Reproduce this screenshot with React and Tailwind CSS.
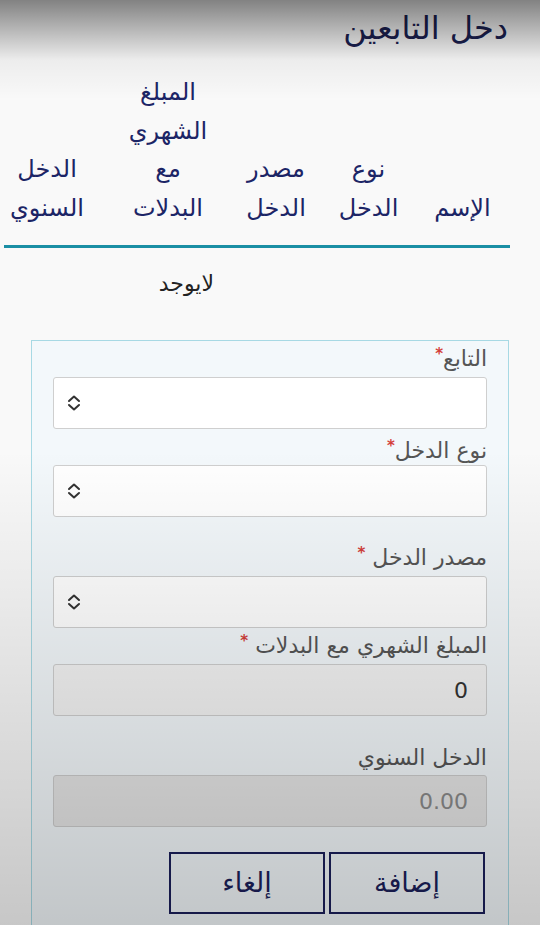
import React from 'react';

const FONT = { fontFamily: '"DejaVu Sans", "Noto Sans", sans-serif' };

const SelectArrows = () => (
  <svg width="16" height="18" viewBox="0 0 16 18" fill="none" stroke="#333" strokeWidth="2" strokeLinecap="round" strokeLinejoin="round">
    <path d="M3 7 L8 2.5 L13 7" />
    <path d="M3 11 L8 15.5 L13 11" />
  </svg>
);

const Label = ({ text, space, className = '' }) => (
  <div className={`h-[28px] text-right text-[22px] leading-[28px] text-[#555] ${className}`}>
    {text}
    {space ? ' ' : ''}
    <span className="align-top text-[15px] font-bold leading-[18px] text-[#d43f3a]">*</span>
  </div>
);

const SelectBox = ({ className = '' }) => (
  <div className={`flex h-[52px] items-center rounded-[3px] border border-[#cfcfcf] bg-white pl-[12px] ${className}`} dir="ltr">
    <SelectArrows />
  </div>
);

const App = () => {
  const headers = [
    { lines: ['الإسم'], cls: '' },
    { lines: ['نوع', 'الدخل'], cls: '' },
    { lines: ['مصدر', 'الدخل'], cls: 'pl-[8px]' },
    { lines: ['المبلغ', 'الشهري', 'مع', 'البدلات'], cls: 'pl-[7px]' },
    { lines: ['الدخل', 'السنوي'], cls: 'pr-[17px]' },
  ];

  return (
    <div dir="rtl" className="relative min-h-[925px] w-[540px] overflow-hidden bg-[#f9f9f9]" style={FONT}>
      <div className="pr-[32px] pt-[6px] text-[32px] leading-[44px] text-[#1b2152]">دخل التابعين</div>

      <div className="ml-[4px] mr-[30px] mt-[23px]">
        <div className="grid grid-cols-[95px_93px_100px_115px_1fr] items-end border-b-[3px] border-[#1b8fa5] pb-[18px]">
          {headers.map((h, i) => (
            <div key={i} className={`text-center text-[24px] leading-[38.5px] text-[#1c2566] ${h.cls}`}>
              {h.lines.map((l, j) => (
                <div key={j}>{l}</div>
              ))}
            </div>
          ))}
        </div>
        <div className="pr-[296px] pt-[22px] text-[22px] leading-[28px] text-[#222]">لايوجد</div>
      </div>

      <div className="ml-[31px] mr-[31px] mt-[42px] min-h-[600px] border border-[#a7d9e4] bg-[#f3f8fb] px-[21px] pt-[4px]">
        <Label text="التابع" />
        <SelectBox className="mt-[4px]" />

        <Label text="نوع الدخل" className="mt-[8px]" />
        <SelectBox />

        <Label text="مصدر الدخل" space className="mt-[27px]" />
        <SelectBox className="mt-[4px]" />

        <Label text="المبلغ الشهري مع البدلات" space className="mt-[4px]" />
        <div className="mt-[4px] flex h-[52px] items-center rounded-[3px] border border-[#cfcfcf] bg-[#f4f4f4] pr-[18px] text-[22px] text-[#333]">
          0
        </div>

        <div className="mt-[28px] h-[28px] text-right text-[22px] leading-[28px] text-[#555]">الدخل السنوي</div>
        <div className="mt-[3px] flex h-[52px] items-center rounded-[3px] border border-[#cdcdcd] bg-[#e6e6e6] pr-[18px] text-[22px] text-[#8a8a8a]">
          0.00
        </div>

        <div className="mt-[25px] flex gap-[4px] pr-[2px]">
          <button className="h-[62px] w-[156px] border-2 border-[#1b1f5a] bg-transparent text-[27px] text-[#1b1f5a]">إضافة</button>
          <button className="h-[62px] w-[156px] border-2 border-[#1b1f5a] bg-transparent text-[27px] text-[#1b1f5a]">إلغاء</button>
        </div>
      </div>

      <div className="pointer-events-none absolute inset-0 bg-[linear-gradient(to_bottom,rgba(0,0,0,0.48)_0px,rgba(0,0,0,0.05)_60px,rgba(0,0,0,0)_100px,rgba(0,0,0,0)_450px,rgba(0,0,0,0.2)_925px)]" />
    </div>
  );
};

export default App;
